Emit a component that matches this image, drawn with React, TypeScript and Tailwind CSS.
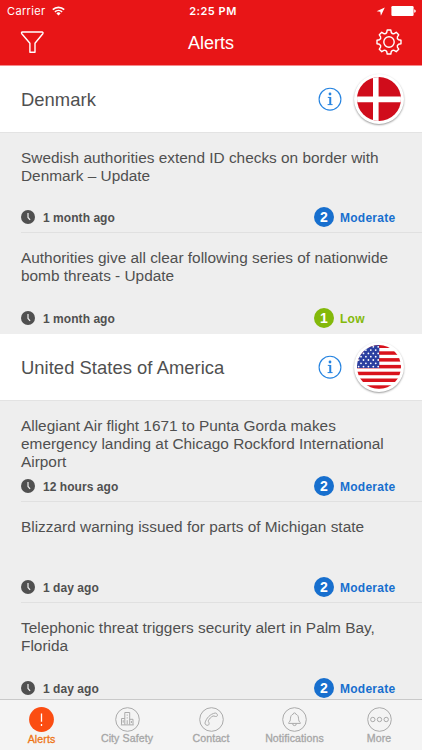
import React from 'react';

type Level = 'Moderate' | 'Low';

interface Alert {
  title: string[];
  time: string;
  level: Level;
  height: string;
}

interface Country {
  name: string;
  flag: React.ReactNode;
  alerts: Alert[];
}

const DenmarkFlag: React.FC = () => (
  <svg viewBox="0 0 44 44" className="h-[44px] w-[44px] rounded-full">
    <rect width="44" height="44" fill="#d00c1b" />
    <path d="M18.8 0v44M0 22.4h44" stroke="#fff" strokeWidth="5.6" />
  </svg>
);

const UsaFlag: React.FC = () => {
  const stars = [];
  for (let row = 0; row < 7; row++) {
    for (let col = 0; col < 5; col++) {
      stars.push(
        <circle key={`${row}-${col}`} cx={1.6 + col * 4.9 + (row % 2) * 2.4} cy={1.8 + row * 3.3} r="0.9" fill="#fff" />
      );
    }
  }
  return (
    <svg viewBox="0 0 44 44" className="h-[44px] w-[44px] rounded-full">
      <rect width="44" height="44" fill="#fff" />
      {[0, 1, 2, 3, 4, 5, 6].map((i) => (
        <rect key={i} y={-0.5 + i * 6.8} width="44" height="3.5" fill="#d9121c" />
      ))}
      <rect width="22.3" height="23" fill="#2b3fa0" />
      <g clipPath="url(#canton)">{stars}</g>
      <clipPath id="canton">
        <rect width="22.3" height="23" />
      </clipPath>
    </svg>
  );
};

const countries: Country[] = [
  {
    name: 'Denmark',
    flag: <DenmarkFlag />,
    alerts: [
      {
        title: ['Swedish authorities extend ID checks on border with', 'Denmark – Update'],
        time: '1 month ago',
        level: 'Moderate',
        height: 'h-[100px]',
      },
      {
        title: ['Authorities give all clear following series of nationwide', 'bomb threats - Update'],
        time: '1 month ago',
        level: 'Low',
        height: 'h-[101px]',
      },
    ],
  },
  {
    name: 'United States of America',
    flag: <UsaFlag />,
    alerts: [
      {
        title: [
          'Allegiant Air flight 1671 to Punta Gorda makes',
          'emergency landing at Chicago Rockford International',
          'Airport',
        ],
        time: '12 hours ago',
        level: 'Moderate',
        height: 'h-[101px]',
      },
      {
        title: ['Blizzard warning issued for parts of Michigan state'],
        time: '1 day ago',
        level: 'Moderate',
        height: 'h-[101px]',
      },
      {
        title: ['Telephonic threat triggers security alert in Palm Bay,', 'Florida'],
        time: '1 day ago',
        level: 'Moderate',
        height: 'h-[101px]',
      },
    ],
  },
];

const levels = {
  Moderate: { value: 2, badge: 'bg-[#176fce]', text: 'text-[#176fce]' },
  Low: { value: 1, badge: 'bg-[#83b90a]', text: 'text-[#83b90a]' },
};

const StatusBar: React.FC = () => (
  <div className="grid h-[22px] grid-cols-3 items-center pl-[7px] pr-[6px] font-['Inter',sans-serif] text-[11px]">
    <div className="flex items-center gap-[6px]">
      <span className="tracking-[0.35px]">Carrier</span>
      <svg viewBox="0 0 13 10" className="h-[10px] w-[13px]" fill="none" stroke="#fff" strokeWidth="1.6">
        <path d="M0.8 3.7a8.2 8.2 0 0 1 11.4 0M2.9 5.9a5.2 5.2 0 0 1 7.2 0" />
        <path d="M6.5 9.4 4.4 7.4a3 3 0 0 1 4.2 0z" fill="#fff" stroke="none" />
      </svg>
    </div>
    <span className="pl-[3px] text-center font-semibold tracking-[0.5px]">2:25 PM</span>
    <div className="flex items-center justify-end gap-[6px]">
      <svg viewBox="0 0 9 9" className="h-[9px] w-[9px]">
        <path d="M8.8 0.4 0.6 4.2l3.7.6.6 3.9z" fill="#fff" />
      </svg>
      <svg viewBox="0 0 25 10" className="h-[10px] w-[25px]" fill="#fff">
        <rect x="0.4" width="22.2" height="10" rx="1.2" />
        <path d="M23.2 3.2q1.6.4 1.6 1.8t-1.6 1.8z" />
      </svg>
    </div>
  </div>
);

const NavBar: React.FC = () => (
  <div className="grid h-[43px] grid-cols-3 items-center px-[20px] pb-[3px]">
    <svg viewBox="0 0 24 22" className="h-[22px] w-[24px]" fill="none" stroke="#fff" strokeWidth="1.4" strokeLinejoin="round">
      <path d="M2.2 1h20.2q1.1.7.4 1.7L15 12.3v8.9H9.9v-8.9L1.8 2.7Q1 1.6 2.2 1z" />
    </svg>
    <h1 className="pt-[2px] text-center text-[18px]">Alerts</h1>
    <svg viewBox="-13 -13 26 26" className="h-[26px] w-[26px] justify-self-end" fill="none" stroke="#fff" strokeWidth="1.4" strokeLinejoin="round">
      <circle r="5.2" />
      <path d="M-1.8-12H1.8L2.3-9.5Q3.4-7.8 5.2-8.4L7.2-9.7 9.7-7.2 8.4-5.2Q7.8-3.4 9.5-2.3L12-1.8V1.8L9.5 2.3Q7.8 3.4 8.4 5.2L9.7 7.2 7.2 9.7 5.2 8.4Q3.4 7.8 2.3 9.5L1.8 12H-1.8L-2.3 9.5Q-3.4 7.8-5.2 8.4L-7.2 9.7-9.7 7.2-8.4 5.2Q-7.8 3.4-9.5 2.3L-12 1.8V-1.8L-9.5-2.3Q-7.8-3.4-8.4-5.2L-9.7-7.2-7.2-9.7-5.2-8.4Q-3.4-7.8-2.3-9.5z" />
    </svg>
  </div>
);

const ClockIcon: React.FC = () => (
  <svg viewBox="0 0 14 14" className="h-[14px] w-[14px]">
    <circle cx="7" cy="7" r="7" fill="#505050" />
    <path d="M7 2.9v4.6l2.1 2.3" fill="none" stroke="#eee" strokeWidth="1.2" />
  </svg>
);

const AlertRow: React.FC<{ alert: Alert; last: boolean }> = ({ alert, last }) => {
  const level = levels[alert.level];
  return (
    <li className={`flex flex-col pl-[21px] ${alert.height}`}>
      <div className="h-[61px] pt-[16px] text-[15.4px] leading-[18px]">
        {alert.title.map((line) => (
          <p key={line} className="whitespace-nowrap">
            {line}
          </p>
        ))}
      </div>
      <div className="flex grow items-end pb-[5px] text-[12px] font-bold">
        <div className="flex h-[20px] w-[293px] items-center gap-[8px]">
          <ClockIcon />
          <span className="pt-px tracking-[0.05px]">{alert.time}</span>
        </div>
        <div className={`flex h-[20px] items-center gap-[6px] ${level.text}`}>
          <span className={`flex h-[20px] w-[20px] items-center justify-center rounded-full text-[14px] text-white ${level.badge}`}>
            {level.value}
          </span>
          <span className="pt-px tracking-[0.25px]">{alert.level}</span>
        </div>
      </div>
      <div className={last ? 'h-px' : 'h-px bg-[#e0e0e0]'} />
    </li>
  );
};

const CountrySection: React.FC<{ country: Country }> = ({ country }) => (
  <section>
    <div className="flex h-[67px] items-center border-b border-[#e3e3e3] bg-white pl-[21px] pr-[18px]">
      <h2 className="grow pt-[2px] text-[18.4px] tracking-[0.04px]">{country.name}</h2>
      <svg viewBox="0 0 24 24" className="mr-[12px] h-[24px] w-[24px]" fill="none" stroke="#2583e0">
        <circle cx="12" cy="12.2" r="10.9" strokeWidth="1.1" />
        <circle cx="12" cy="7" r="1.4" fill="#2583e0" stroke="none" />
        <path d="M9.8 10.4h2.5v7M9.6 17.6h5" strokeWidth="1" />
        <path d="M12.3 10v7.6" strokeWidth="1.9" />
      </svg>
      <div className="flex h-[50px] w-[50px] items-center justify-center rounded-full bg-white shadow-[0_1px_2px_rgba(0,0,0,0.4)]">
        {country.flag}
      </div>
    </div>
    <ul>
      {country.alerts.map((alert, i) => (
        <AlertRow key={alert.title[0]} alert={alert} last={i === country.alerts.length - 1} />
      ))}
    </ul>
  </section>
);

const tabs = [
  {
    name: 'City Safety',
    width: 'w-[88px]',
    icon: <path d="M6.5 17.7v-6.2h3.3M9.8 17.7V5.5h4.9v12.2M14.7 12.3h3.3v5.4M5.8 17.9h12.9M12.2 7.5v1.2M12.2 10.3v1.2M12.2 13.2v4M8.2 13.2v2.5M16.4 14v2" />,
  },
  {
    name: 'Contact',
    width: 'w-[80px]',
    icon: <path d="M6 15.9c1.2-4.6 5.2-9 10.2-9.9 1.5 0 2.4 1.3 2.2 2.6-.3.9-1.3 1-2.3.8-.8-.2-1.4-.7-2.1-.4-2 .9-3.7 2.7-4.6 4.7-.3.8.4 1.3.6 2.1.3 1.1 0 2.2-1.1 2.5-1.4.2-3.2-.8-2.9-2.4z" />,
  },
  {
    name: 'Notifications',
    width: 'w-[87px]',
    icon: <path d="M11.3 7.1a1.2 1.2 0 1 1 2.4 0c1.9.6 2.7 2 2.8 4.1.1 2.4.6 3.5 1.8 4.4v.8H6.7v-.8c1.2-.9 1.7-2 1.8-4.4.1-2.1.9-3.5 2.8-4.1zM10.7 16.8a1.8 1.8 0 0 0 3.6 0" />,
  },
  {
    name: 'More',
    width: 'w-[82px]',
    icon: (
      <g>
        <circle cx="5.8" cy="12.5" r="2.2" />
        <circle cx="12.5" cy="12.5" r="2.2" />
        <circle cx="19.2" cy="12.5" r="2.2" />
      </g>
    ),
  },
];

const TabBar: React.FC = () => (
  <nav className="flex h-[51px] shrink-0 border-t border-[#c9c9c9] bg-[#f4f4f4] text-[10.6px] tracking-[0.08px] text-[#a6a6a6] [-webkit-text-stroke:0.3px]">
    <div className="flex w-[83px] flex-col items-center pt-[7px] text-[#ee7416]">
      <svg viewBox="0 0 25 25" className="h-[25px] w-[25px]">
        <circle cx="12.5" cy="12.5" r="12.4" fill="#fb4d12" />
        <path d="M12.5 6.5v8.3M12.5 17v1.9" stroke="#fff" strokeWidth="1.3" />
      </svg>
      <span className="leading-[14px]">Alerts</span>
    </div>
    {tabs.map((tab) => (
      <div key={tab.name} className={`flex flex-col items-center pt-[7px] ${tab.width}`}>
        <svg viewBox="0 0 25 25" className="h-[25px] w-[25px]" fill="none" stroke="#aaa" strokeWidth="1">
          <circle cx="12.5" cy="12.5" r="11.8" />
          {tab.icon}
        </svg>
        <span className="whitespace-nowrap leading-[13px]">{tab.name}</span>
      </div>
    ))}
  </nav>
);

const App: React.FC = () => {
  return (
    <div className="flex h-[750px] w-[422px] flex-col overflow-hidden bg-[#eee] font-['Liberation_Sans',Arial,sans-serif] text-[#505050]">
      <header className="h-[66px] shrink-0 border-b border-[#f58a8c] bg-[#e81517] text-white">
        <StatusBar />
        <NavBar />
      </header>
      <main className="min-h-0 grow overflow-hidden">
        {countries.map((country) => (
          <CountrySection key={country.name} country={country} />
        ))}
      </main>
      <TabBar />
    </div>
  );
};

export default App;
